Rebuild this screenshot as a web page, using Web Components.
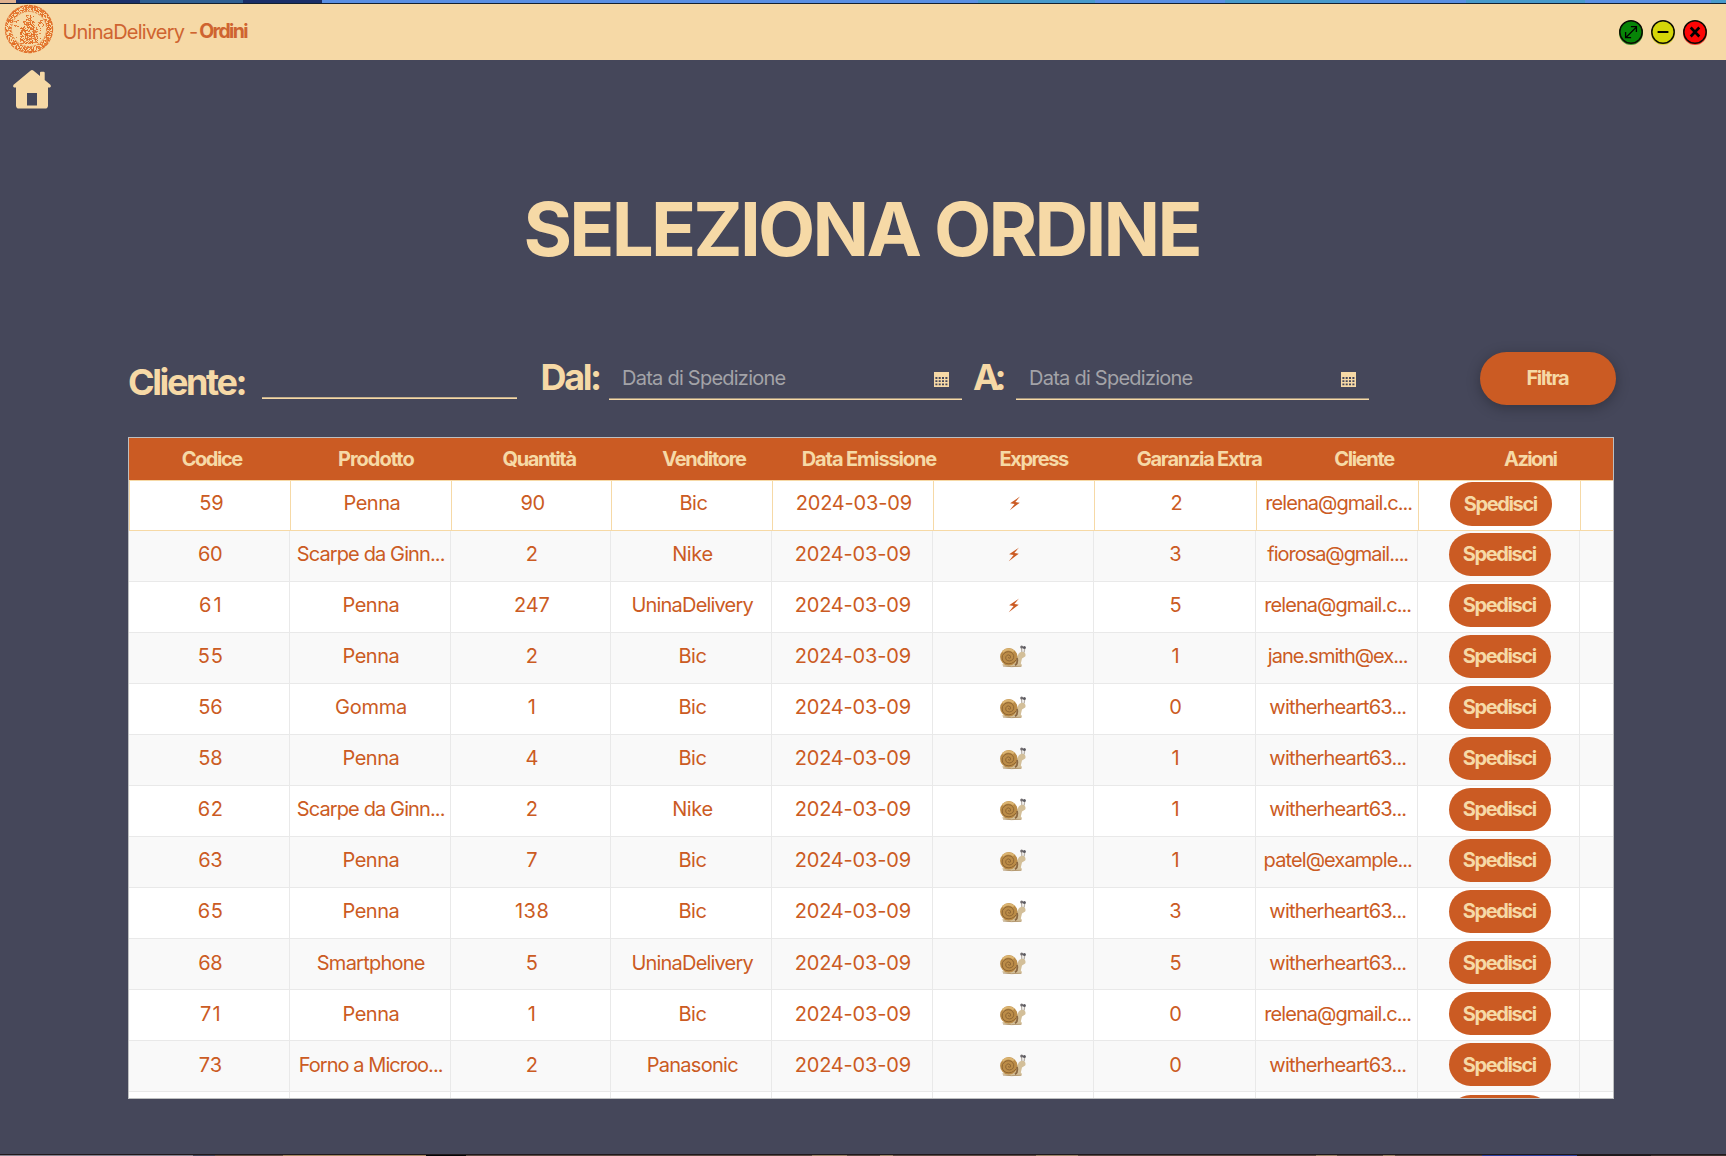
<!DOCTYPE html>
<html lang="it">
<head>
<meta charset="utf-8">
<title>UninaDelivery - Ordini</title>
<style>
html,body{margin:0;height:100%;overflow:hidden}
body{font-family:Inter,"Liberation Sans",sans-serif;--cream:#f6d9a6;--orange:#cb5b23;--slate:#45475a;background:var(--slate)}
</style>
</head>
<body>
<orders-app></orders-app>
<script>
const define = (name, html, setup) => customElements.define(name, class extends HTMLElement {
  connectedCallback() {
    if (this.shadowRoot) return;
    const root = this.attachShadow({ mode: 'open' });
    root.innerHTML = html;
    if (setup) setup.call(this, root);
  }
});

/* A run of text tracked in or out to span a given ink width (px). */
const pen = document.createElement('canvas').getContext('2d');
define('fit-text', `<style>:host{display:inline-block;white-space:pre;line-height:1.2}</style><slot></slot>`, function () {
  const w = +this.getAttribute('w'), t = this.textContent;
  if (!w || t.length < 2) return;
  const cs = getComputedStyle(this);
  pen.font = `${cs.fontWeight} ${cs.fontSize} ${cs.fontFamily}`;
  const m = pen.measureText(t);
  const ls = (w - (m.actualBoundingBoxLeft + m.actualBoundingBoxRight)) / (t.length - 1);
  this.style.letterSpacing = ls.toFixed(3) + 'px';
  this.style.marginRight = (-ls).toFixed(3) + 'px';
});

define('desktop-edge', `<style>
:host{display:block;flex:none;box-sizing:border-box}
:host([side=top]){height:4px;border-bottom:1px solid #14202f;background:linear-gradient(90deg,#dfb18f 16px,#1b306b 16px 140px,#2f5f93 140px 243px,#1a2e68 243px 322px,#5a8fe3 322px 978px,#479acb 978px 1095px,#5a8fe3 1095px 1225px,#479acb 1225px 1340px,#5a8fe3 1340px 1466px,#479acb 1466px 1585px,#5a8fe3 1585px 1711px,#479acb 1711px) padding-box}
:host([side=bottom]){height:2px;border-top:1px solid #20191c;background:linear-gradient(90deg,#888390 193px,#45475a 193px 215px,#6b5548 215px 283px,#a98a64 283px 426px,#060606 426px 466px,#5d4b43 466px 812px,#9c8468 812px 847px,#5d4b43 847px 880px,#9c8468 880px 893px,#5d4b43 893px 1036px,#9c8468 1036px 1078px,#5d4b43 1078px 1316px,#9c8468 1316px 1337px,#5d4b43 1337px 1383px,#9c8468 1383px 1395px,#5d4b43 1395px 1482px,#2b3f9c 1482px 1577px,#1c1a1c 1577px 1651px,#3d322f 1651px) padding-box}
</style>`);

/* University seal: speckled outer ring around a seated figure. */
define('brand-seal', `<style>:host{display:block;width:50px;height:50px}svg{display:block}</style>
<svg width="50" height="50" viewBox="0 0 50 50"><g id="s" fill="#e0651c"></g>
<circle cx="25" cy="25" r="23.6" fill="none" stroke="#e0702c" stroke-width="1.1" stroke-dasharray="4 .8"/>
<circle cx="25" cy="25" r="17.6" fill="none" stroke="#e0702c" stroke-width=".9" stroke-dasharray="2.4 1"/></svg>`, function (root) {
  let seed = 11, out = '';
  const rnd = () => (seed = (seed * 16807) % 2147483647) / 2147483647;
  for (let y = 1; y < 49; y++) for (let x = 1; x < 49; x++) {
    const dx = x + .5 - 25, dy = y + .5 - 25, r = Math.hypot(dx, dy), k = rnd();
    const ring = r > 18 && r < 23.5;
    const half = dy < -8 ? 3.5 : dy < -2 ? 6 : 9;
    const body = Math.abs(dx) < half && dy > -14 && dy < 15;
    const arms = Math.abs(dx) > 9 && Math.abs(dx) < 15 && dy > -9 && dy < -2;
    const p = ring ? .64 : body ? .6 : arms ? .3 : r < 18 ? .025 : 0;
    if (k < p) out += `<rect x="${x}" y="${y}" width="1" height="1" opacity="${(.65 + rnd() * .35).toFixed(2)}"/>`;
  }
  root.getElementById('s').innerHTML = out;
});

const glyphs = {
  max: ['#078407', '<path d="M8.2 18.2 17.8 8.6M12.9 7.6H18.4V13.1M7.6 13.1V18.7H13.1" fill="none" stroke="#000" stroke-width="1.3"/>'],
  min: ['#d5d608', '<path d="M7.6 13H18.4" stroke="#000" stroke-width="2"/>'],
  close: ['#fd0505', '<path d="M8.7 8.5 17.3 17.5M17.3 8.5 8.7 17.5" stroke="#000" stroke-width="2.6"/>']
};
define('window-button', `<style>:host{display:block;width:26px;height:27px}svg{display:block}</style><svg width="26" height="27" viewBox="0 0 26 27"></svg>`, function (root) {
  const [c, g] = glyphs[this.getAttribute('kind')];
  root.querySelector('svg').innerHTML = `<circle cx="13" cy="14" r="12" fill="${c}" opacity=".75"/><circle cx="13" cy="13" r="11.2" fill="${c}" stroke="#0b0b04" stroke-width="1.5"/>${g}`;
});

define('title-bar', `<style>
:host{display:flex;height:56px;flex:none;background:var(--cream);color:#cf6430;align-items:flex-start;box-sizing:border-box}
brand-seal{margin:0 0 0 4px}
.name{font-size:20px;margin:16px 0 0 8.5px}.page{font-size:19.5px;font-weight:700;margin:15.5px 0 0 1px}
.btns{margin:15px 18px 0 auto;display:flex;gap:6px}
</style><brand-seal></brand-seal><fit-text class="name" w="133.5">UninaDelivery -</fit-text><fit-text class="page" w="49">Ordini</fit-text>
<div class="btns"><window-button kind="max"></window-button><window-button kind="min"></window-button><window-button kind="close"></window-button></div>`);

define('home-button', `<style>:host{display:block;width:40px;height:40px}svg{display:block}</style>
<svg width="40" height="40" viewBox="0 0 40 40"><path fill="#f6d9a6" fill-rule="evenodd" d="M18.4 1.7Q20 .3 21.6 1.7L28 7V3.8Q28 2.8 29 2.8H31.6Q32.7 2.8 32.7 3.8V11L38.4 15.8Q39.8 17.6 38 18.5H36V36.5Q36 39.6 33 39.6H7Q4 39.6 4 36.5V18.5H2Q.2 17.6 1.6 15.8ZM15 24V36.5H25V24Z"/></svg>`);

define('calendar-icon', `<style>:host{display:block}svg{display:block}</style>
<svg width="15" height="15" viewBox="0 0 15 15"><path fill="#f6d9a6" d="M0 0H15V15H0Z"/><path fill="#45475a" d="M1.4 5h2v1.9h-2zM4.7 5h2v1.9h-2zM8 5h2v1.9H8zM11.4 5h2v1.9h-2zM1.4 8.2h2v1.9h-2zM4.7 8.2h2v1.9h-2zM8 8.2h2v1.9H8zM11.4 8.2h2v1.9h-2zM1.4 11.4h2v1.9h-2zM4.7 11.4h2v1.9h-2zM8 11.4h2v1.9H8zM11.4 11.4h2v1.9h-2z"/></svg>`);

define('date-field', `<style>
:host{display:flex;width:353px;height:48px;box-sizing:border-box;border-bottom:1px solid var(--cream);box-shadow:inset 0 -1px #a0937f;justify-content:space-between;align-items:flex-start;padding:12px 13px 0;color:#a3a3a8;font-size:20px}
calendar-icon{margin:8px .5px 0 0}
fit-text{margin-top:1.5px}
</style><fit-text w="162.5">Data di Spedizione</fit-text><calendar-icon></calendar-icon>`);

define('pill-button', `<style>
:host{display:flex;align-items:center;justify-content:center;box-sizing:border-box;background:var(--orange);color:var(--cream);font-weight:700;font-size:20px;border-radius:22px;width:102px;height:43.4px}
:host([large]){width:136px;height:53px;border-radius:27px;box-shadow:0 3px 14px rgba(0,0,0,.28)}
</style><slot></slot>`);

define('filter-bar', `<style>
:host{display:flex;height:68px;align-items:flex-start;color:var(--cream);font-weight:700;font-size:36px;padding-left:128px}
.c{margin-top:9px}.line{width:255px;height:47px;box-sizing:border-box;border-bottom:1px solid var(--cream);box-shadow:inset 0 -1px #c4b08e;margin-left:14px}
.d{margin:4px 0 0 24px}.a{margin:4px 0 0 11px}
date-field{font-weight:400}
.f1{margin-left:7px}.f2{margin-left:9.5px}
pill-button{margin:0 0 0 auto}
.grow{flex:1;display:flex;padding-right:110px}
.grow fit-text{margin-bottom:2px}
fit-text{flex:none}
</style><fit-text class="c" w="116.5">Cliente:</fit-text><div class="line"></div><fit-text class="d" w="57.5">Dal:</fit-text><date-field class="f1"></date-field><fit-text class="a" w="31.5">A:</fit-text><date-field class="f2"></date-field><div class="grow"><pill-button large><fit-text w="41.5">Filtra</fit-text></pill-button></div>`);

define('snail-icon', `<style>:host{display:block}svg{display:block}</style>
<svg width="28" height="25" viewBox="0 0 28 25">
<path d="M2.5 21Q12 24 22.5 22.4 23.4 20.6 21.8 19.5L23 14.5 26.2 12.5Q27.4 9 24.5 7.8 20.5 7.3 19 11 17.5 17 8 18.5Z" fill="#d3bf99"/>
<path d="M4 22Q12 23.2 22.3 22.2" stroke="#b59a72" stroke-width="1" fill="none"/>
<path d="M22.8 8 22.6 4M25.2 8.4 25.6 4.4" stroke="#b9b1a8" stroke-width="1.3"/><circle cx="22.7" cy="3" r="1.5" fill="#716d70"/><circle cx="25.4" cy="3.4" r="1.5" fill="#5c5a60"/>
<circle cx="9.8" cy="12.8" r="8.7" fill="#bb8c48"/><path d="M3.6 8Q8.6 3.2 14.8 7.4" stroke="#dbb471" stroke-width="2.2" fill="none"/>
<path d="M17 16Q13 21 7 19.4 2 17 3.5 11.5 6.5 6.3 12 8.2 16.2 11 14 15.3 10.5 18.5 7 15.5 5.8 12 9.2 10.8 12.2 11.2 11.6 13.8 9.8 15 9 13.3" fill="none" stroke="#8f6633" stroke-width="1"/>
<path d="M18 14Q19.2 19.5 16 21.3" stroke="#8b6841" stroke-width="1.8" fill="none"/></svg>`);

define('bolt-icon', `<style>:host{display:block}svg{display:block}</style>
<svg width="12" height="15" viewBox="0 0 12 15"><path fill="#cb5b23" d="M11 .6 1.1 7.3 5.6 7.9.8 14.2 10.8 6.7 6.3 6.1Z"/></svg>`);

const inks = { '61': 20.5, '71': 19.5, 'Scarpe da Ginn...': 147, 'Forno a Microo...': 143, Penna: 55, Gomma: 70, Smartphone: 107, Bic: 27, Nike: 39.3, UninaDelivery: 121, Panasonic: 90.5,
  'relena@gmail.c...': 146, 'fiorosa@gmail....': 141, 'jane.smith@ex...': 141, 'witherheart63...': 137, 'patel@example...': 147.5, '247': 34.5, '138': 33.5 };
const fit = t => `<fit-text w="${inks[t] || (t.length > 9 ? 115 : t.length > 1 ? 23 : 0)}">${t}</fit-text>`;

define('order-row', `<style>
:host{display:flex;flex:none;height:51.04px;box-sizing:border-box;border-bottom:1px solid #e9e9e9;background:#fff;color:#cb5b23;font-size:20px}
:host([alt]){background:#f9f9f9}
div{box-sizing:border-box;flex:none;width:160.75px;height:100%;display:flex;align-items:center;justify-content:center;border-right:1px solid #e9e9e9;padding:0 0 3px 3px}
div:nth-of-type(5),div:nth-of-type(6){padding-left:2px}
div:nth-of-type(7),div:nth-of-type(9){width:162px}div:nth-of-type(8){width:162.5px;padding-left:4px}
div:last-child{padding:0 0 3px 3px}
snail-icon{margin:1px 1px 0 0}
:host([focused]){height:50.6px;border-color:var(--cream);border-top:1px solid var(--cream);border-left:1px solid var(--cream)}
:host([focused]) div{border-color:var(--cream);padding-bottom:4px}:host([focused]) div:last-child{padding-bottom:3px}
</style>`, function (root) {
  const [code, product, qty, seller, express, warranty, client] = this.getAttribute('data').split('|');
  root.innerHTML += [code, product, qty, seller, '2024-03-09'].map(t => `<div>${fit(t)}</div>`).join('')
    + `<div>${express === 'y' ? '<bolt-icon></bolt-icon>' : '<snail-icon></snail-icon>'}</div><div>${fit(warranty)}</div><div>${fit(client)}</div>`
    + `<div><pill-button><fit-text w="74">Spedisci</fit-text></pill-button></div>`;
});

define('table-head', `<style>
:host{display:flex;flex:none;height:42px;background:var(--orange);color:var(--cream);font-weight:700;font-size:20px}
span{box-sizing:border-box;width:164.9px;flex:none;display:flex;justify-content:center;align-items:center;padding-bottom:1px}
span:nth-of-type(1){padding-left:2px}
span:nth-of-type(n+3):nth-of-type(-n+6){padding-right:3px}
span:nth-of-type(n+7):nth-of-type(-n+8){padding-right:2px}
span:nth-of-type(9){padding-left:1px}
</style>`, function (root) {
  root.innerHTML += [['Codice', 61.5], ['Prodotto', 75.5], ['Quantità', 74], ['Venditore', 84.7], ['Data Emissione', 134.5], ['Express', 68.5], ['Garanzia Extra', 125.5], ['Cliente', 61], ['Azioni', 53.5]]
    .map(([t, w]) => `<span><fit-text w="${w}">${t}</fit-text></span>`).join('');
});

define('orders-table', `<style>
:host{display:flex;flex-direction:column;box-sizing:border-box;width:1486px;height:662px;margin-left:128px;border:1px solid #bdbfc0;background:#fff;overflow:hidden}
</style><table-head></table-head>`, function (root) {
  ['59|Penna|90|Bic|y|2|relena@gmail.c...', '60|Scarpe da Ginn...|2|Nike|y|3|fiorosa@gmail....', '61|Penna|247|UninaDelivery|y|5|relena@gmail.c...',
   '55|Penna|2|Bic|n|1|jane.smith@ex...', '56|Gomma|1|Bic|n|0|witherheart63...', '58|Penna|4|Bic|n|1|witherheart63...', '62|Scarpe da Ginn...|2|Nike|n|1|witherheart63...',
   '63|Penna|7|Bic|n|1|patel@example...', '65|Penna|138|Bic|n|3|witherheart63...', '68|Smartphone|5|UninaDelivery|n|5|witherheart63...', '71|Penna|1|Bic|n|0|relena@gmail.c...',
   '73|Forno a Microo...|2|Panasonic|n|0|witherheart63...'].forEach((d, i) => {
    const r = document.createElement('order-row');
    r.setAttribute('data', d);
    if (i % 2) r.setAttribute('alt', '');
    if (!i) r.setAttribute('focused', '');
    root.append(r);
  });
  root.append(document.createElement('order-peek'));
});

/* Top sliver of the next row, cut off by the bottom of the viewport. */
define('order-peek', `<style>:host{display:flex;flex:none;height:51px}
div{box-sizing:border-box;width:160.75px;flex:none;border-right:1px solid #e9e9e9}
div:nth-of-type(7),div:nth-of-type(9){width:162px}div:nth-of-type(8){width:162.5px}
div:last-child{display:flex;justify-content:center;padding:3px 0 0 3px}</style>
${'<div></div>'.repeat(8)}<div><pill-button></pill-button></div>`);

define('orders-app', `<style>
:host{display:flex;flex-direction:column;width:1726px;height:1156px;background:var(--slate)}
home-button{margin:8.5px 0 0 12px}
h1{margin:75.5px 0 0;font-size:74.3px;font-weight:700;line-height:90px;color:var(--cream);text-align:center}
filter-bar{margin-top:78px}
orders-table{margin-top:17px}
desktop-edge[side=bottom]{margin-top:auto}
</style><desktop-edge side="top"></desktop-edge><title-bar></title-bar><home-button></home-button>
<h1><fit-text w="673">SELEZIONA ORDINE</fit-text></h1>
<filter-bar></filter-bar><orders-table></orders-table><desktop-edge side="bottom"></desktop-edge>`);
</script>
</body>
</html>
